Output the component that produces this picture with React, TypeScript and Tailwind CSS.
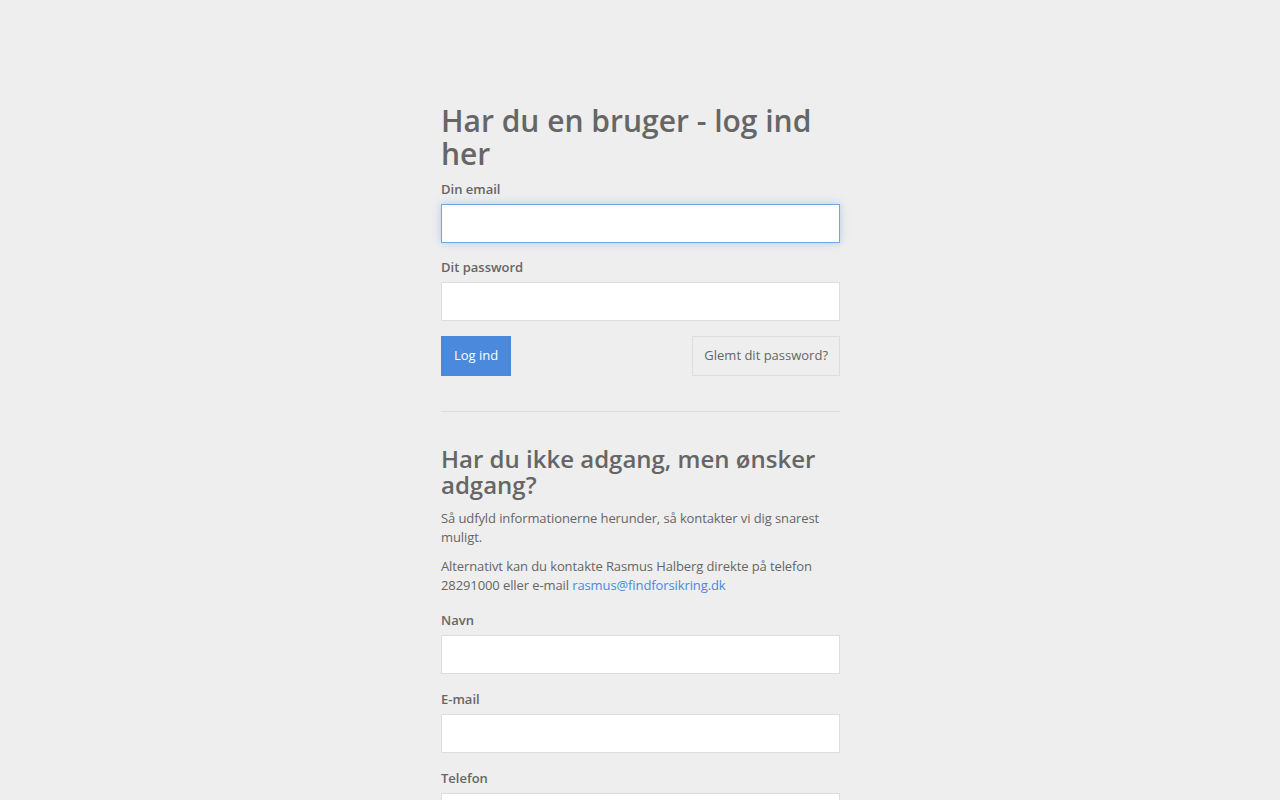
import React from "react";

const font = { fontFamily: '"Open Sans", "Noto Sans", sans-serif' };

function Field({ label, focused = false, type = "text", gap = "mb-[14px]" }: { label: string; focused?: boolean; type?: string; gap?: string }) {
  return (
    <div className={gap}>
      <label className="block h-5 leading-5 text-[13px] font-semibold text-[#666] mb-[5px]">{label}</label>
      <input
        type={type}
        className={
          "block w-full h-[39px] bg-white border outline-none px-3 text-[14px] text-[#555] " +
          (focused
            ? "border-[#76a3e4] shadow-[0_0_8px_rgba(74,137,220,0.35)]"
            : "border-[#dddddd]")
        }
      />
    </div>
  );
}

export default function App() {
  return (
    <div className="min-h-[800px] bg-[#eeeeee] text-[#666]" style={font}>
      <div className="mx-auto w-[400px] pl-px pt-[104px] pb-10">
        <h1 className="text-[30px] leading-[33px] font-semibold text-[#666] mb-[9px]">
          Har du en bruger - log ind her
        </h1>
        <Field label="Din email" focused type="email" />
        <Field label="Dit password" type="password" />
        <div className="mt-[15px] flex justify-between">
          <button className="h-10 w-[70px] bg-[#4a89dc] text-white text-[13px]">Log ind</button>
          <button className="h-10 px-[11px] border border-[#dddddd] bg-[#eeeeee] text-[#666] text-[13px]">
            Glemt dit password?
          </button>
        </div>
        <hr className="mt-[35px] mb-[34px] border-0 border-t border-[#dddddd]" />
        <h2 className="text-[24px] leading-[26px] font-semibold text-[#666] mb-[11px]">
          Har du ikke adgang, men ønsker adgang?
        </h2>
        <p className="text-[13px] leading-[19px] tracking-[-0.1px] text-[#666] mb-[10px]">
          Så udfyld informationerne herunder, så kontakter vi dig snarest muligt.
        </p>
        <p className="text-[13px] leading-[19px] tracking-[-0.1px] text-[#666] mb-[15px]">
          Alternativt kan du kontakte Rasmus Halberg direkte på telefon 28291000 eller e-mail{" "}
          <a className="text-[#4a89dc]" href="#">rasmus@findforsikring.dk</a>
        </p>
        <Field label="Navn" gap="mb-[15px]" />
        <Field label="E-mail" gap="mb-[15px]" />
        <Field label="Telefon" gap="" />
      </div>
    </div>
  );
}
